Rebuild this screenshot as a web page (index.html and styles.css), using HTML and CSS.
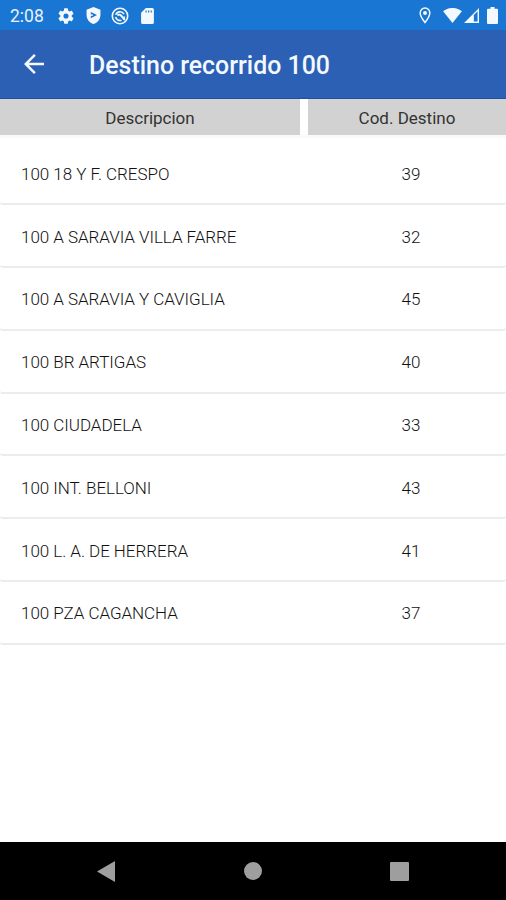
FILE: index.html
```html
<!DOCTYPE html>
<html lang="es">
<head>
  <meta charset="UTF-8">
  <meta name="viewport" content="width=device-width, initial-scale=1.0">
  <title>Destino recorrido 100</title>
  <link rel="stylesheet" href="styles.css">
</head>
<body>
  <!-- Status bar -->
  <div class="status-bar">
    <span class="clock">2:08</span>
    <div class="notifications">
      <svg class="gear" viewBox="2 2 20 20"><path fill-rule="evenodd" d="M19.14 12.94c.04-.3.06-.61.06-.94s-.02-.64-.07-.94l2.03-1.58a.5.5 0 0 0 .12-.61l-1.92-3.32a.5.5 0 0 0-.59-.22l-2.39.96c-.5-.38-1.03-.7-1.62-.94L14.4 2.81a.5.5 0 0 0-.48-.41h-3.84a.5.5 0 0 0-.47.41l-.36 2.54c-.59.24-1.13.57-1.62.94l-2.39-.96a.5.5 0 0 0-.59.22L2.74 8.87a.5.5 0 0 0 .12.61l2.03 1.58c-.05.3-.09.63-.09.94s.02.64.07.94l-2.03 1.58a.5.5 0 0 0-.12.61l1.92 3.32c.12.22.37.29.59.22l2.39-.96c.5.38 1.03.7 1.62.94l.36 2.54c.05.24.24.41.48.41h3.84c.24 0 .44-.17.47-.41l.36-2.54c.59-.24 1.13-.56 1.62-.94l2.39.96c.22.08.47 0 .59-.22l1.92-3.32a.5.5 0 0 0-.12-.61zM12 15.2A3.2 3.2 0 1 1 12 8.8a3.2 3.2 0 0 1 0 6.4z"/></svg>
      <svg class="shield" viewBox="3 1 18 22"><path fill-rule="evenodd" d="M12 1 3 4.500V11c0 5.600 3.800 10.700 9 12 5.200-1.300 9-6.400 9-12V4.500zM8.500 7.500v8L16.500 11.500z"/><path d="M6.500 10.500h4.500v2H6.500z"/></svg>
      <svg class="radar" viewBox="0 0 18 18"><g fill="none" stroke="#f4f9ff"><circle cx="9" cy="9" r="7.700" stroke-width="1.600"/><path stroke-width="1.600" d="M4.800 7.800C6 4.200 11 3.700 13 7.200M13.400 9.500c0 1-.4 2-1 2.700M10.500 13.300a4.600 4.600 0 0 1-5.900-3.300"/><path stroke-width="1.900" d="M6.500 8.500c1.200-1.200 2.500-1 3.500 0L14 13"/></g></svg>
      <svg class="sd" viewBox="4 2 16 20"><path fill-rule="evenodd" d="M18 2h-8L4 8v12a2 2 0 0 0 2 2h12a2 2 0 0 0 2-2V4a2 2 0 0 0-2-2zM9.500 5H11v2.500H9.500zM12.700 5h1.500v2.500h-1.500zM15.900 5h1.500v2.500h-1.500z"/></svg>
    </div>
    <div class="system">
      <svg class="pin" viewBox="0 0 12 17"><path fill="none" stroke="#f4f9ff" stroke-width="1.500" d="M6 1a4.800 4.800 0 0 0-4.800 5C1.200 9.500 6 15.500 6 15.500S10.800 9.500 10.800 6A4.800 4.800 0 0 0 6 1z"/><circle cx="6" cy="6" r="2"/></svg>
      <svg class="wifi" viewBox="0 0 20 16"><path d="M10 16 0 3.500C5.500-1.200 14.500-1.200 20 3.500z"/></svg>
      <svg class="signal" viewBox="0 0 16 16"><path fill-rule="evenodd" d="M16 0v16H0zM14.500 3.500 10.500 7.500V14.500h4z"/></svg>
      <svg class="battery" viewBox="0 0 11 17"><path d="M3.500 0h4v1.800H10a1 1 0 0 1 1 1V16a1 1 0 0 1-1 1H1a1 1 0 0 1-1-1V2.800a1 1 0 0 1 1-1h2.500z"/></svg>
    </div>
  </div>

  <!-- App bar -->
  <div class="app-bar">
    <svg class="back" viewBox="4 4 16 16"><path d="M20 11H7.830l5.590-5.590L12 4l-8 8 8 8 1.410-1.410L7.830 13H20z"/></svg>
    <h1>Destino recorrido 100</h1>
  </div>

  <div class="columns">
    <div class="column">Descripcion</div>
    <div class="column">Cod. Destino</div>
  </div>

  <div class="list">
    <div class="row"><span class="name">100 18 Y F. CRESPO</span><span class="code">39</span></div>
    <div class="row"><span class="name">100 A SARAVIA VILLA FARRE</span><span class="code">32</span></div>
    <div class="row"><span class="name">100 A SARAVIA Y CAVIGLIA</span><span class="code">45</span></div>
    <div class="row"><span class="name">100 BR ARTIGAS</span><span class="code">40</span></div>
    <div class="row"><span class="name">100 CIUDADELA</span><span class="code">33</span></div>
    <div class="row"><span class="name">100 INT. BELLONI</span><span class="code">43</span></div>
    <div class="row"><span class="name">100 L. A. DE HERRERA</span><span class="code">41</span></div>
    <div class="row"><span class="name">100 PZA CAGANCHA</span><span class="code">37</span></div>
  </div>

  <!-- Navigation bar -->
  <div class="nav-bar">
    <svg class="nav-back" viewBox="0 0 18 21"><path d="M18 0v21L0 10.500z"/></svg>
    <div class="nav-home"></div>
    <div class="nav-recent"></div>
  </div>
</body>
</html>
```

FILE: styles.css
```css
* {
  box-sizing: border-box;
}

body {
  margin: 0;
  height: 900px;
  display: flex;
  flex-direction: column;
  overflow: hidden;
  background-color: #fff;
  color: #333;
  font-family: Roboto, sans-serif;
  font-size: 17px;
}

svg {
  display: block;
  flex: none;
  fill: #f4f9ff;
}

.status-bar {
  height: 30px;
  padding: 1px 8px 0 10px;
  display: flex;
  align-items: center;
  background-color: #1976d2;
}

.clock {
  width: 48px;
  font-size: 17.5px;
  color: #e8f2fd;
}

.notifications,
.system {
  display: flex;
  align-items: center;
}

.system {
  margin-left: auto;
}

.gear {
  width: 16px;
  height: 16px;
}

.shield {
  width: 15px;
  height: 17px;
  margin-left: 12px;
}

.radar {
  width: 18px;
  height: 18px;
  margin-left: 10px;
}

.sd {
  width: 13px;
  height: 16px;
  margin-left: 12px;
}

.pin {
  width: 12px;
  height: 17px;
}

.wifi {
  width: 19px;
  height: 15px;
  margin-left: 12px;
}

.signal {
  width: 15px;
  height: 15px;
  margin-left: 2px;
}

.battery {
  width: 11px;
  height: 17px;
  margin-left: 8px;
}

.app-bar {
  height: 69px;
  padding-left: 24px;
  display: flex;
  align-items: center;
  background-color: #2b60b5;
  border-bottom: 1px solid #1b50a5;
}

.back {
  width: 20px;
  height: 20px;
}

.app-bar h1 {
  margin: 3px 0 0 45px;
  font-size: 24.9px;
  font-weight: 500;
  color: #f4f8ff;
}

.columns {
  height: 36px;
  display: grid;
  grid-template-columns: 300px 1fr;
  column-gap: 8px;
}

.column {
  display: flex;
  align-items: center;
  justify-content: center;
  padding-top: 1px;
  background-color: #d2d2d2;
}

.list {
  padding-top: 4.4px;
  border-top: 3px solid #fafafa;
}

.row {
  height: 62.8px;
  display: grid;
  grid-template-columns: 316px 1fr;
  align-items: center;
  border-bottom: 2px solid #ebeced;
  border-radius: 3px;
  font-weight: 300;
  color: #111;
}

.name {
  padding: 2px 0 0 21px;
  letter-spacing: -0.04px;
}

.code {
  padding-top: 2px;
  text-align: center;
}

.nav-bar {
  height: 58px;
  margin-top: auto;
  padding: 0 97px;
  display: flex;
  align-items: center;
  justify-content: space-between;
  background-color: #000;
}

.nav-back {
  width: 18px;
  height: 21px;
  fill: #9e9e9e;
}

.nav-home {
  width: 18px;
  height: 18px;
  border-radius: 50%;
  background-color: #9e9e9e;
}

.nav-recent {
  width: 19px;
  height: 19px;
  border-radius: 1px;
  background-color: #9e9e9e;
}
```
